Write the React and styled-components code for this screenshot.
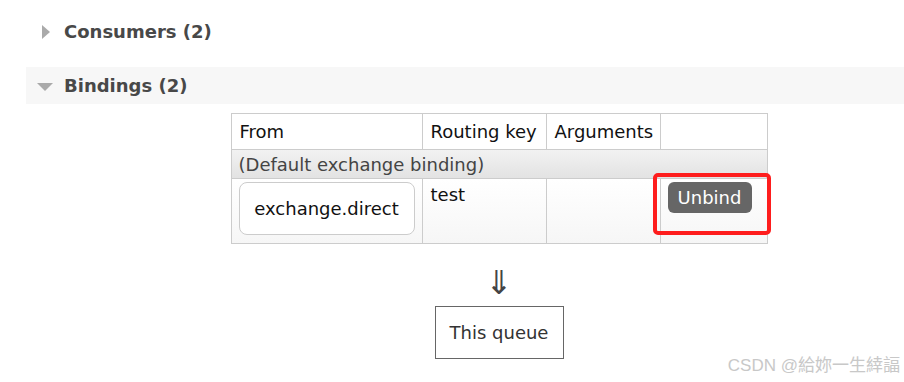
import React from 'react'
import styled, { createGlobalStyle } from 'styled-components'

const GlobalStyle = createGlobalStyle`
    body {
        margin: 0;
        background: #fff;
        font-family: "DejaVu Sans", Verdana, sans-serif;
    }
`

const Page = styled.div`
    position: relative;
    width: 904px;
    height: 382px;
    padding-top: 13px;
    box-sizing: border-box;
    overflow: hidden;
`

const SectionHeader = styled.div`
    display: flex;
    align-items: center;
    height: 37px;
    margin-left: 26px;
    margin-bottom: ${({ open }) => (open ? '9px' : '17px')};
    background: ${({ open }) => (open ? '#f7f7f7' : 'transparent')};
`

const Toggle = styled.span`
    width: 38px;
    display: flex;
    justify-content: center;
    align-items: center;
`

const TriRight = styled.span`
    width: 0;
    height: 0;
    border-top: 7px solid transparent;
    border-bottom: 7px solid transparent;
    border-left: 8px solid #aaa;
    margin-left: 2px;
`

const TriDown = styled.span`
    width: 0;
    height: 0;
    border-left: 8px solid transparent;
    border-right: 8px solid transparent;
    border-top: 8px solid #aaa;
    margin-top: 3px;
`

const SectionTitle = styled.h2`
    margin: 0;
    font-size: 18px;
    font-weight: bold;
    color: #484848;
`

const Bindings = styled.div`
    width: 536px;
    margin-left: 231px;
    display: flex;
    flex-direction: column;
    align-items: center;
`

const Table = styled.table`
    width: 536px;
    table-layout: fixed;
    border-collapse: collapse;
    font-size: 18px;
    color: #111;
    white-space: nowrap;
`

const Th = styled.th`
    height: 36px;
    padding: 0 4px 0 8px;
    text-align: left;
    font-weight: normal;
    border: 1px solid #ccc;
    box-sizing: border-box;
`

const GroupRow = styled.tr`
    background: linear-gradient(#f2f2f2, #e2e2e2);
`

const GroupCell = styled.td`
    height: 29px;
    padding: 0 7px;
    color: #444;
    border: 1px solid #ccc;
    box-sizing: border-box;
`

const DataRow = styled.tr`
    background: linear-gradient(#fff, #f6f6f6);
`

const Td = styled.td`
    position: relative;
    height: 65px;
    vertical-align: top;
    padding: ${({ pad }) => pad || '4px 8px'};
    border: 1px solid #ccc;
    box-sizing: border-box;
`

const ExchangeBox = styled.div`
    width: 176px;
    height: 53px;
    box-sizing: border-box;
    border: 1px solid #ccc;
    border-radius: 8px;
    background: #fff;
    display: flex;
    align-items: center;
    justify-content: center;
`

const UnbindButton = styled.button`
    width: 84px;
    height: 31px;
    border: none;
    border-radius: 6px;
    background: #666;
    color: #fff;
    font-family: inherit;
    font-size: 18px;
    padding: 0;
`

/* red annotation drawn over the unbind cell */
const Highlight = styled.div`
    position: absolute;
    left: -8px;
    top: -6px;
    width: 118px;
    height: 62px;
    box-sizing: border-box;
    border: 4px solid #fe1d1d;
    border-radius: 5px;
    pointer-events: none;
`

const Arrow = styled.div`
    margin-top: 19px;
    font-size: 33px;
    line-height: 40px;
    color: #444;
`

const QueueBox = styled.div`
    margin-top: 3px;
    width: 129px;
    height: 53px;
    box-sizing: border-box;
    border: 1px solid #666;
    display: flex;
    align-items: center;
    justify-content: center;
    font-size: 18px;
    color: #333;
`

const Watermark = styled.div`
    position: absolute;
    right: 4px;
    bottom: 6px;
    font-family: "Liberation Sans", "Noto Sans CJK TC", sans-serif;
    font-size: 17px;
    color: #c8c8c8;
`

function App() {
    return (
        <Page>
            <GlobalStyle />
            <SectionHeader>
                <Toggle><TriRight /></Toggle>
                <SectionTitle>Consumers (2)</SectionTitle>
            </SectionHeader>
            <SectionHeader open>
                <Toggle><TriDown /></Toggle>
                <SectionTitle>Bindings (2)</SectionTitle>
            </SectionHeader>

            <Bindings>
                <Table>
                    <colgroup>
                        <col style={{ width: 191 }} />
                        <col style={{ width: 124 }} />
                        <col style={{ width: 114 }} />
                        <col style={{ width: 107 }} />
                    </colgroup>
                    <thead>
                        <tr>
                            <Th>From</Th>
                            <Th>Routing key</Th>
                            <Th>Arguments</Th>
                            <Th></Th>
                        </tr>
                    </thead>
                    <tbody>
                        <GroupRow>
                            <GroupCell colSpan={4}>(Default exchange binding)</GroupCell>
                        </GroupRow>
                        <DataRow>
                            <Td pad="3px 7px"><ExchangeBox>exchange.direct</ExchangeBox></Td>
                            <Td pad="5px 8px">test</Td>
                            <Td></Td>
                            <Td pad="3px 7px">
                                <UnbindButton>Unbind</UnbindButton>
                                <Highlight />
                            </Td>
                        </DataRow>
                    </tbody>
                </Table>
                <Arrow>⇓</Arrow>
                <QueueBox>This queue</QueueBox>
            </Bindings>

            <Watermark>CSDN @給妳一生緈諨</Watermark>
        </Page>
    )
}

export default App
